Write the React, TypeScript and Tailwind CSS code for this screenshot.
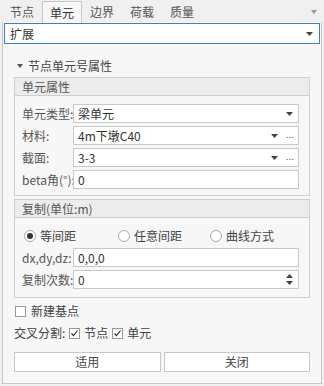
import React from "react"

const font = { fontFamily: '"Noto Sans CJK SC", "Noto Sans", sans-serif' }

function Caret({ className = "" }: { className?: string }) {
  return (
    <svg width="7" height="4" viewBox="0 0 7 4" className={className}>
      <path d="M0 0h7L3.5 4z" fill="#444" />
    </svg>
  )
}

function Field({
  label,
  value,
  caret,
  dots,
  spin,
}: {
  label: string
  value: string
  caret?: boolean
  dots?: boolean
  spin?: boolean
}) {
  return (
    <div className="flex items-center h-[19px] mb-[3px]">
      <div className="w-[51px] text-[12px] leading-none text-[#555] whitespace-nowrap">{label}</div>
      <div className="flex items-center flex-1 h-[19px] bg-white border border-[#c8c8c8] pl-[4px] pr-[4px] mr-[10px]">
        <span className="flex-1 text-[12px] leading-none text-[#333]">{value}</span>
        {caret && <Caret className="mr-[1px]" />}
        {dots && (
          <span className="ml-[7px] text-[10px] leading-none text-[#666] -mt-[3px]">...</span>
        )}
        {spin && (
          <div className="flex flex-col gap-[3px] mr-[1px]">
            <svg width="7" height="4" viewBox="0 0 7 4">
              <path d="M0 4h7L3.5 0z" fill="#444" />
            </svg>
            <Caret />
          </div>
        )}
      </div>
    </div>
  )
}

function Radio({ label, checked }: { label: string; checked?: boolean }) {
  return (
    <div className="flex items-center gap-[4px]">
      <div className="w-[12px] h-[12px] rounded-full border border-[#aaa] bg-white flex items-center justify-center">
        {checked && <div className="w-[6px] h-[6px] rounded-full bg-[#333]" />}
      </div>
      <span className="text-[12px] leading-none text-[#444]">{label}</span>
    </div>
  )
}

function Check({ checked }: { checked?: boolean }) {
  return (
    <div className="w-[11px] h-[11px] border border-[#999] bg-white flex items-center justify-center">
      {checked && (
        <svg width="9" height="9" viewBox="0 0 9 9">
          <path d="M1.5 4.5l2 2 4-5" stroke="#333" strokeWidth="1.2" fill="none" />
        </svg>
      )}
    </div>
  )
}

export default function App() {
  const tabs = ["节点", "单元", "边界", "荷载", "质量"]
  return (
    <div className="w-[324px] h-[386px] bg-[#f0f0f0] overflow-hidden leading-none" style={font}>
      {/* tab bar */}
      <div className="flex items-end h-[22px] pl-[2px] relative">
        {tabs.map(t =>
          t === "单元" ? (
            <div
              key={t}
              className="w-[40px] h-[22px] flex items-center justify-center text-[12px] text-[#333] bg-[#f7f7f7] border border-b-0 border-[#c8c8c8] -mb-px relative z-10"
            >
              {t}
            </div>
          ) : (
            <div
              key={t}
              className="w-[40px] h-[20px] flex items-center justify-center text-[12px] text-[#555]"
            >
              {t}
            </div>
          )
        )}
        <svg width="6" height="4" viewBox="0 0 6 4" className="absolute right-[7px] top-[10px]">
          <path d="M0 0h6L3 4z" fill="#999" />
        </svg>
      </div>

      {/* panel */}
      <div className="ml-[2px] mr-[2px] h-[362px] bg-[#f7f7f7] border border-t-0 border-[#c8c8c8]">
        <div className="mx-px pt-px">
          <div className="flex items-center h-[21px] bg-white border border-[#3b7fc4] pl-[5px] pr-[6px]">
            <span className="flex-1 text-[12px] text-[#333]">扩展</span>
            <Caret />
          </div>
        </div>

        <div className="flex items-center h-[16px] mt-[14px] pl-[14px] gap-[5px]">
          <svg width="6" height="4" viewBox="0 0 6 4">
            <path d="M0 0h6L3 4z" fill="#555" />
          </svg>
          <span className="text-[12px] text-[#444]">节点单元号属性</span>
        </div>

        <div className="ml-[11px] mr-[11px] mt-[3px]">
          {/* group 1 */}
          <div className="border border-[#cfcfcf] bg-[#f7f7f7]">
            <div className="h-[18px] bg-[#ececec] border-b border-[#cfcfcf] flex items-center pl-[7px] text-[12px] text-[#555]">
              单元属性
            </div>
            <div className="pl-[7px] pt-[8px] pb-[3px]">
              <Field label="单元类型:" value="梁单元" caret />
              <Field label="材料:" value="4m下墩C40" caret dots />
              <Field label="截面:" value="3-3" caret dots />
              <Field label="beta角(°):" value="0" />
            </div>
          </div>

          {/* group 2 */}
          <div className="border border-[#cfcfcf] bg-[#f7f7f7] mt-[3px]">
            <div className="h-[18px] bg-[#ececec] border-b border-[#cfcfcf] flex items-center pl-[7px] text-[12px] text-[#555]">
              复制(单位:m)
            </div>
            <div className="pl-[7px] pt-[10px] pb-[5px]">
              <div className="flex items-center h-[16px] pl-[2px] mb-[4px]">
                <div className="w-[94px]">
                  <Radio label="等间距" checked />
                </div>
                <div className="w-[92px]">
                  <Radio label="任意间距" />
                </div>
                <Radio label="曲线方式" />
              </div>
              <Field label="dx,dy,dz:" value="0,0,0" />
              <Field label="复制次数:" value="0" spin />
            </div>
          </div>
        </div>

        <div className="flex items-center gap-[5px] pl-[12px] mt-[5px] h-[16px]">
          <Check />
          <span className="text-[12px] text-[#444]">新建基点</span>
        </div>
        <div className="flex items-center gap-[4px] pl-[11px] mt-[6px] h-[16px] text-[12px] text-[#444]">
          <span>交叉分割:</span>
          <Check checked />
          <span>节点</span>
          <Check checked />
          <span>单元</span>
        </div>

        <div className="flex gap-[3px] ml-[11px] mr-[11px] mt-[11px]">
          <div className="flex-1 h-[20px] bg-white border border-[#c8c8c8] flex items-center justify-center text-[12px] text-[#444]">
            适用
          </div>
          <div className="flex-1 h-[20px] bg-white border border-[#c8c8c8] flex items-center justify-center text-[12px] text-[#444]">
            关闭
          </div>
        </div>
      </div>
    </div>
  )
}
